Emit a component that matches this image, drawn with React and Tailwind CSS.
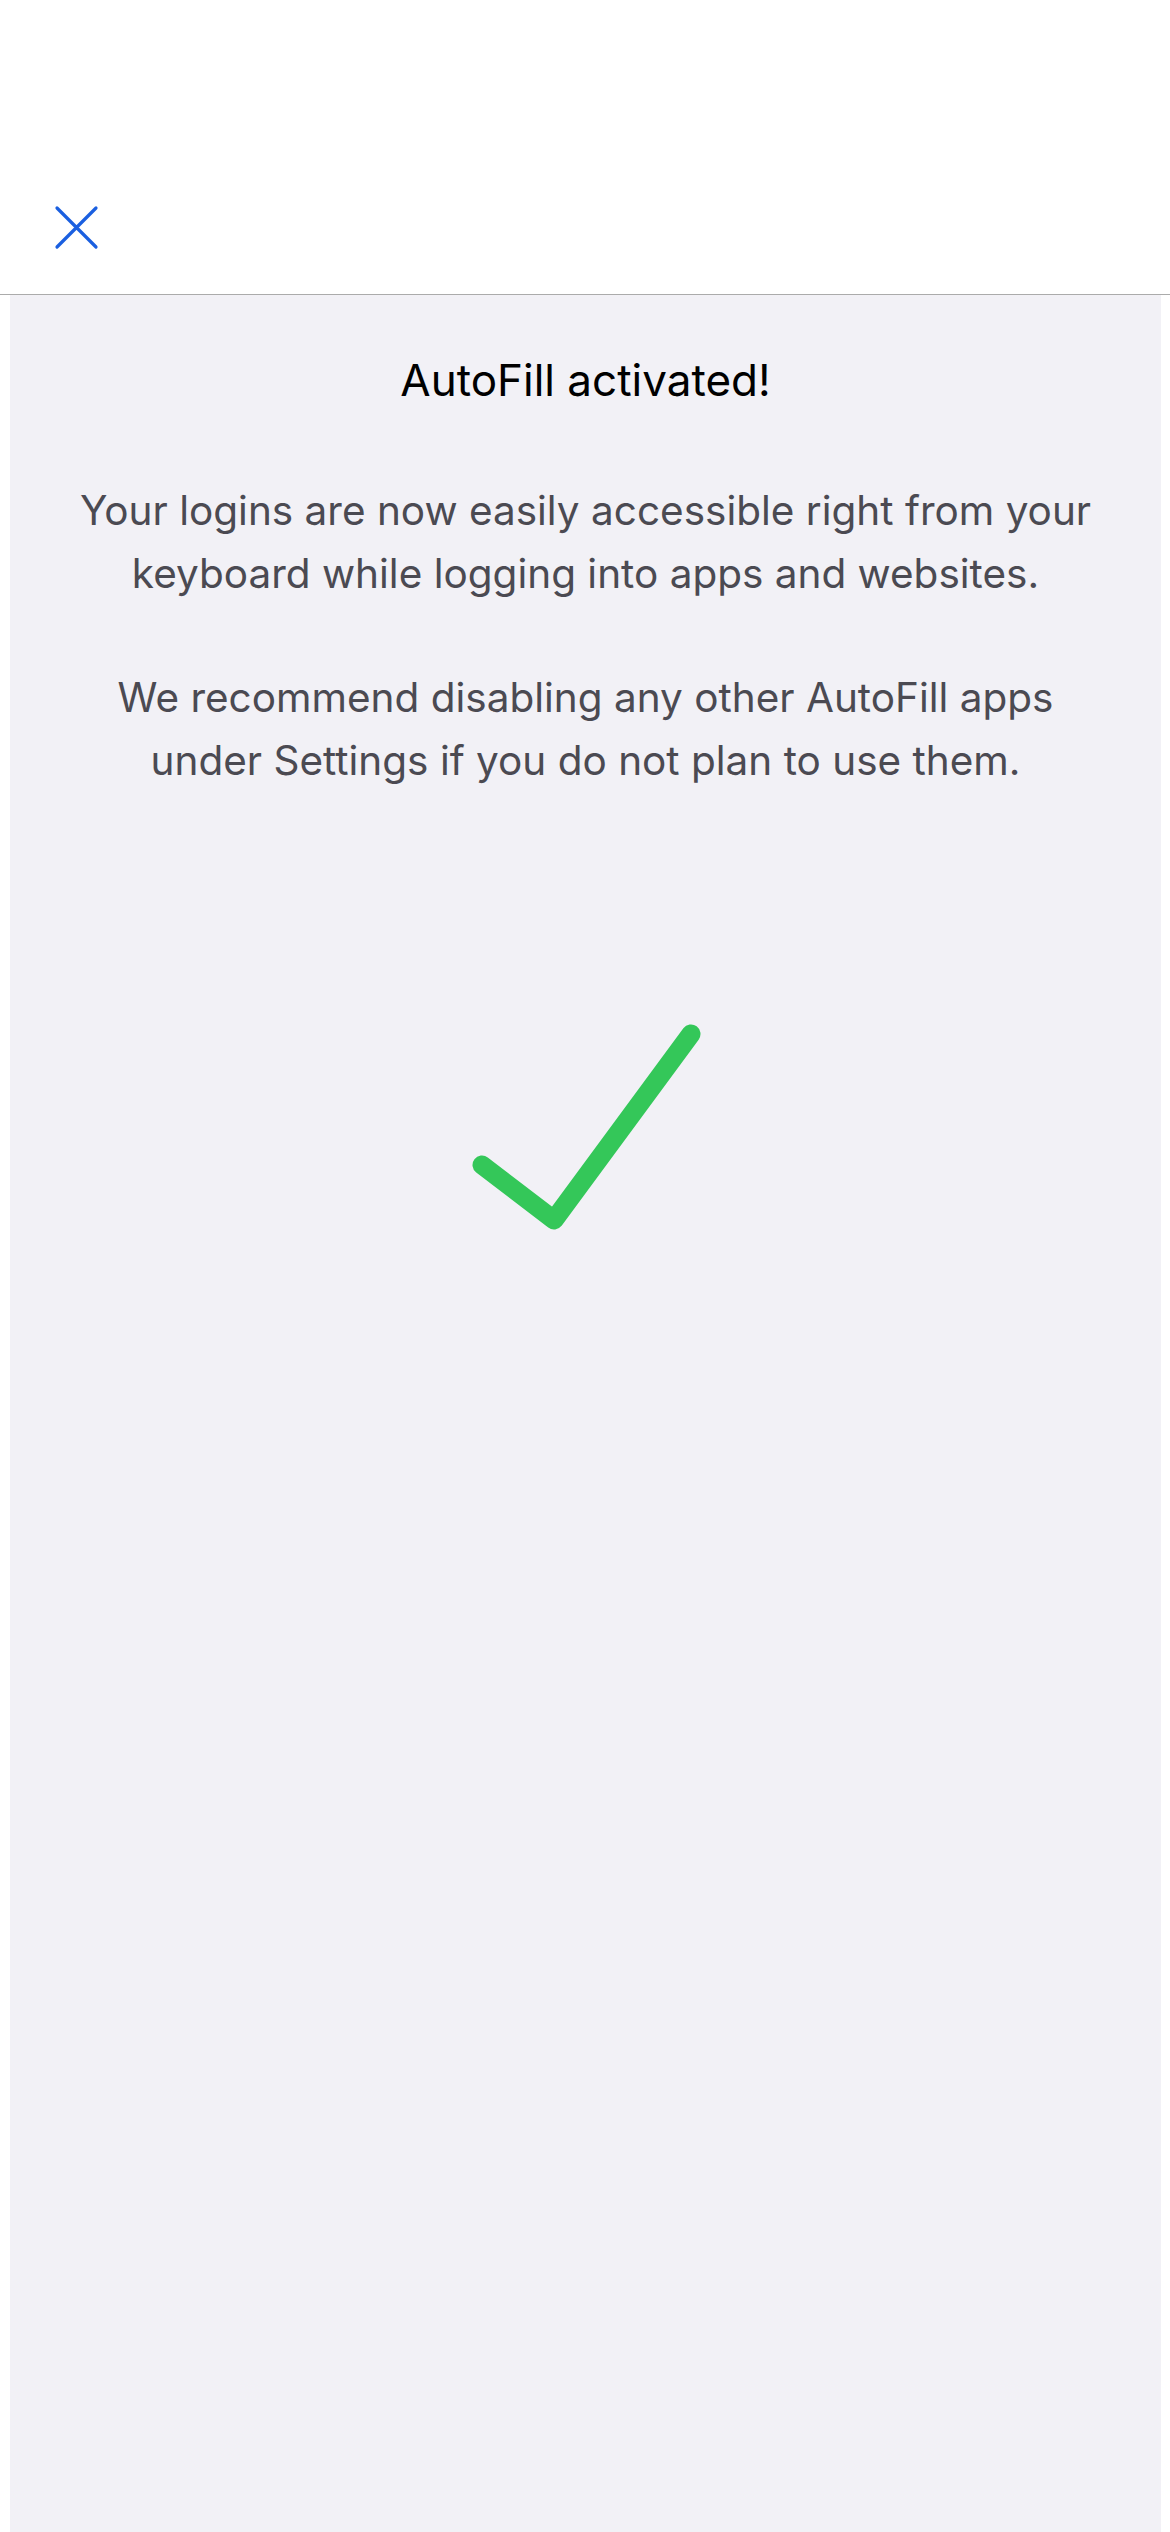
const FONT = { fontFamily: 'Inter, "Noto Sans", sans-serif' };

function CloseIcon() {
  return (
    <svg width="45" height="45" viewBox="0 0 45 45" className="text-[#1a5fe0]">
      <path d="M3 3L42 42M42 3L3 42" stroke="currentColor" strokeWidth="3.2" strokeLinecap="round" fill="none" />
    </svg>
  );
}

export default function App() {
  return (
    <div className="flex h-[2532px] w-[1170px] flex-col bg-white" style={FONT}>
      <header className="h-[295px] shrink-0 border-b border-[#ababab] bg-white pl-[54px] pt-[205px]">
        <button className="flex">
          <CloseIcon />
        </button>
      </header>

      <main className="ml-[10px] mr-[9px] flex flex-1 flex-col items-center bg-[#f2f1f6] text-center">
        <h1 className="mt-[55px] text-[44px] font-normal leading-[60px] text-black">
          AutoFill activated!
        </h1>

        <p className="mt-[69px] text-[40.5px] leading-[63px] text-[#4b4a52]">
          Your logins are now easily accessible right from your
          <br />
          keyboard while logging into apps and websites.
        </p>

        <p className="mt-[61px] text-[40.5px] leading-[63px] text-[#4b4a52]">
          We recommend disabling any other AutoFill apps
          <br />
          under Settings if you do not plan to use them.
        </p>

        <svg width="240" height="212" viewBox="0 0 240 212" className="mt-[229px]">
          <polyline
            points="16,144 88,199 225,13"
            fill="none"
            stroke="#34c759"
            strokeWidth="19"
            strokeLinecap="round"
            strokeLinejoin="round"
          />
        </svg>
      </main>
    </div>
  );
}
